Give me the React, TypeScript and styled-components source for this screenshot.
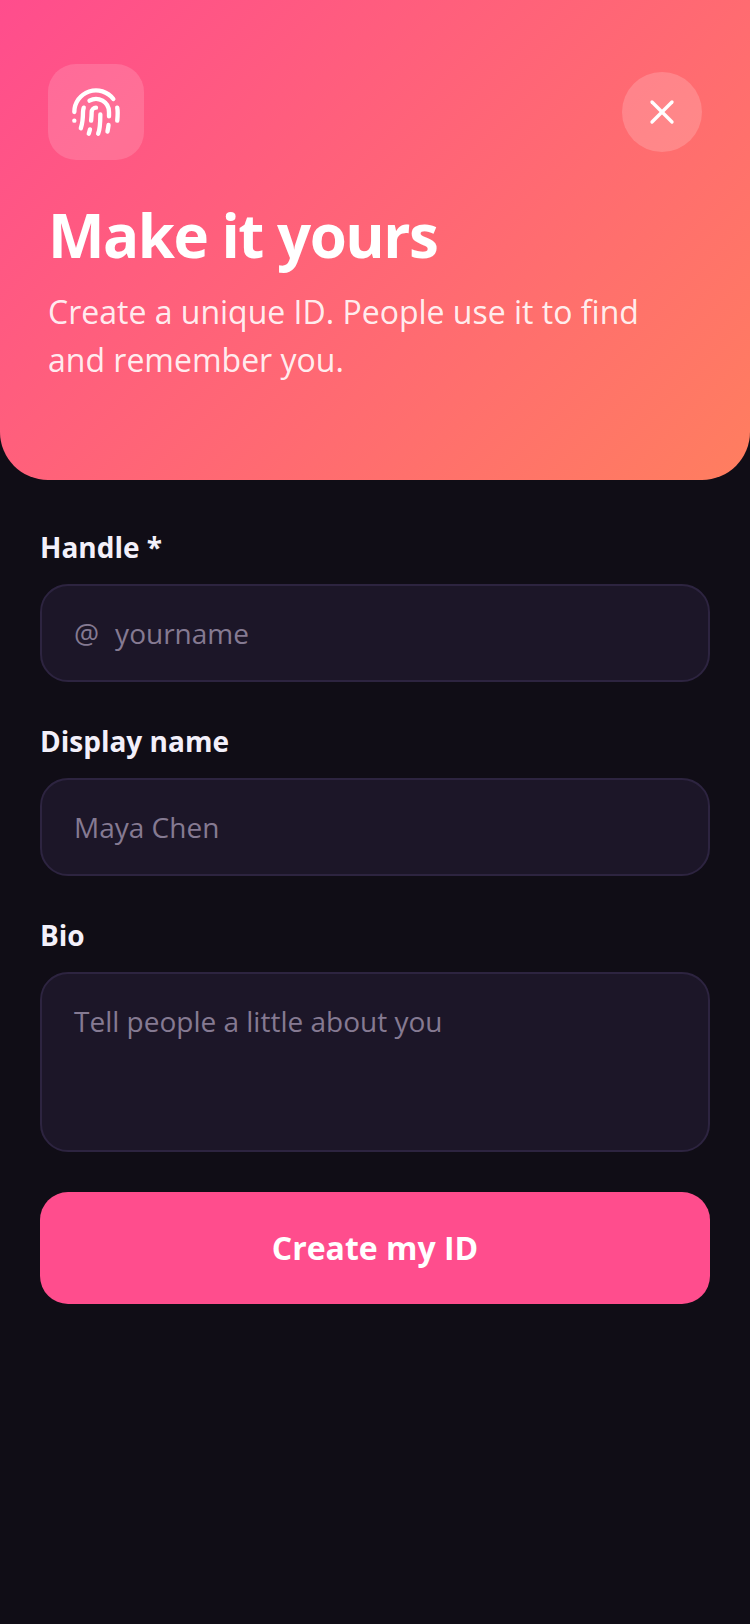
import React from 'react';
import styled, { createGlobalStyle } from 'styled-components';
import { Fingerprint, X } from 'lucide-react';

const GlobalStyle = createGlobalStyle`
  html, body {
    margin: 0;
    padding: 0;
    background: #100d16;
  }
  * {
    box-sizing: border-box;
  }
`;

const Page = styled.div`
  width: 750px;
  height: 1624px;
  overflow: hidden;
  background: #100d16;
  font-family: 'Open Sans', 'Noto Sans', sans-serif;
`;

const Hero = styled.header`
  height: 480px;
  padding: 64px 48px 0;
  background: linear-gradient(135deg, #ff4d8d 0%, #ff7e5f 100%);
  border-radius: 0 0 48px 48px;
`;

const HeroTop = styled.div`
  display: flex;
  justify-content: space-between;
  align-items: center;
  margin-bottom: 39px;
`;

const IconTile = styled.div`
  width: 96px;
  height: 96px;
  border-radius: 28px;
  background: rgba(255, 255, 255, 0.15);
  display: flex;
  align-items: center;
  justify-content: center;
  color: #fff;
`;

const CloseButton = styled.button`
  width: 80px;
  height: 80px;
  padding: 0;
  border: none;
  border-radius: 50%;
  background: rgba(255, 255, 255, 0.18);
  color: #fff;
  display: flex;
  align-items: center;
  justify-content: center;
`;

const Title = styled.h1`
  margin: 0 0 17px;
  font-size: 60px;
  line-height: 72px;
  font-weight: 700;
  letter-spacing: -1.5px;
  color: #fff;
`;

const Subtitle = styled.p`
  margin: 0;
  font-size: 32px;
  line-height: 48px;
  color: rgba(255, 255, 255, 0.9);
`;

const Form = styled.form`
  display: flex;
  flex-direction: column;
  padding: 48px 40px 0;
`;

const Field = styled.div`
  display: flex;
  flex-direction: column;
  gap: 18px;
  margin-bottom: 40px;
`;

const Label = styled.label`
  font-size: 28px;
  line-height: 38px;
  font-weight: 700;
  color: #f3f0fa;
`;

const InputBox = styled.div<{ $multiline?: boolean }>`
  height: ${({ $multiline }) => ($multiline ? '180px' : '98px')};
  padding: ${({ $multiline }) => ($multiline ? '27px 32px' : '0 32px')};
  display: flex;
  align-items: ${({ $multiline }) => ($multiline ? 'flex-start' : 'center')};
  gap: 16px;
  background: #1c1628;
  border: 2px solid #2d2440;
  border-radius: 28px;
`;

const Prefix = styled.span`
  font-size: 28px;
  color: #857a92;
`;

const Placeholder = styled.span`
  font-size: 28px;
  line-height: 40px;
  color: #857a92;
`;

const SubmitButton = styled.button`
  height: 112px;
  padding: 0 0 2px;
  border: none;
  border-radius: 28px;
  background: #ff4d8d;
  color: #fff;
  font-family: inherit;
  font-size: 32px;
  font-weight: 700;
`;

const App: React.FC = () => {
  return (
    <Page>
      <GlobalStyle />
      <Hero>
        <HeroTop>
          <IconTile>
            <Fingerprint size={52} />
          </IconTile>
          <CloseButton type="button">
            <X size={40} />
          </CloseButton>
        </HeroTop>
        <Title>Make it yours</Title>
        <Subtitle>
          Create a unique ID. People use it to find
          <br />
          and remember you.
        </Subtitle>
      </Hero>

      <Form>
        <Field>
          <Label>Handle *</Label>
          <InputBox>
            <Prefix>@</Prefix>
            <Placeholder>yourname</Placeholder>
          </InputBox>
        </Field>
        <Field>
          <Label>Display name</Label>
          <InputBox>
            <Placeholder>Maya Chen</Placeholder>
          </InputBox>
        </Field>
        <Field>
          <Label>Bio</Label>
          <InputBox $multiline>
            <Placeholder>Tell people a little about you</Placeholder>
          </InputBox>
        </Field>
        <SubmitButton type="button">Create my ID</SubmitButton>
      </Form>
    </Page>
  );
};

export default App;
